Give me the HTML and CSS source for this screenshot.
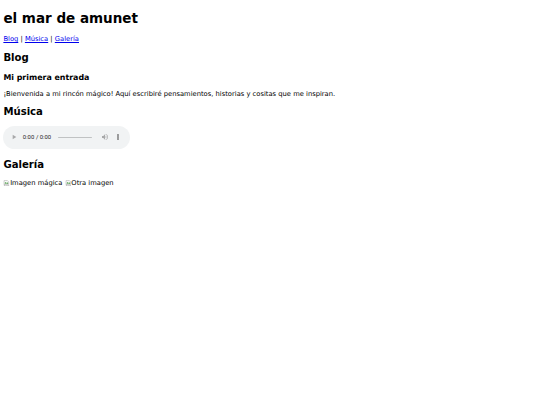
FILE: index.html
```html
<!DOCTYPE html>
<html lang="es">
<head>
<meta charset="utf-8">
<title>el mar de amunet</title>
<link rel="stylesheet" href="styles.css">
</head>
<body>
<h1 class="title">el mar de amunet</h1>
<nav class="menu">
	<a href="#blog">Blog</a> | <a href="#musica">Música</a> | <a href="#galeria">Galería</a>
</nav>

<section id="blog" class="block">
	<h2>Blog</h2>
	<article class="post">
		<h3>Mi primera entrada</h3>
		<p>¡Bienvenida a mi rincón mágico! Aquí escribiré pensamientos, historias y cositas que me inspiran.</p>
	</article>
</section>

<section id="musica" class="block">
	<h2>Música</h2>
	<audio class="player" controls></audio>
</section>

<section id="galeria" class="block gallery">
	<h2>Galería</h2>
	<span class="pic"><svg class="broken" viewBox="0 0 16 16"><path d="M2.5 1.5h8l3 3v5l-2 1.5-2-1.5-2 1.5-2-1.5-3 2z" fill="#fff" stroke="#8a8a8a"/><path d="M4 7l2-2 2 2 2-1.5 2 1.5v1.6l-1 .8-2-1.5-2 1.5-2-1.5-1 .8z" fill="#4f9d4a"/><path d="M2.5 13.5v1h11v-3l-2 1.5-2-1.5-2 1.5-2-1.5z" fill="#fff" stroke="#8a8a8a"/></svg>Imagen mágica</span>
	<span class="pic"><svg class="broken" viewBox="0 0 16 16"><path d="M2.5 1.5h8l3 3v5l-2 1.5-2-1.5-2 1.5-2-1.5-3 2z" fill="#fff" stroke="#8a8a8a"/><path d="M4 7l2-2 2 2 2-1.5 2 1.5v1.6l-1 .8-2-1.5-2 1.5-2-1.5-1 .8z" fill="#4f9d4a"/><path d="M2.5 13.5v1h11v-3l-2 1.5-2-1.5-2 1.5-2-1.5z" fill="#fff" stroke="#8a8a8a"/></svg>Otra imagen</span>
</section>
</body>
</html>
```
FILE: styles.css
```css
body{
	margin:3.375px;
	font-family:"DejaVu Sans", sans-serif;
	font-size:6.75px;
	color:#000;
	background:#fff;
}
.title{
	font-size:13.5px;
	margin:7px 0 9px 0;
}
.menu a{
	color:#0000ee;
}
.block h2{
	font-size:10.125px;
	margin:8.4px 0;
}
.post h3{
	font-size:7.9px;
	margin:10.4px 0 7.9px 0;
}
.post p{
	margin:6.75px 0;
}
.player{
	zoom:0.421875;
}
.gallery h2{
	margin-bottom:9.4px;
}
.pic{
	display:inline-block;
}
.broken{
	width:6.75px;
	height:6.75px;
	vertical-align:-1px;
}
```
